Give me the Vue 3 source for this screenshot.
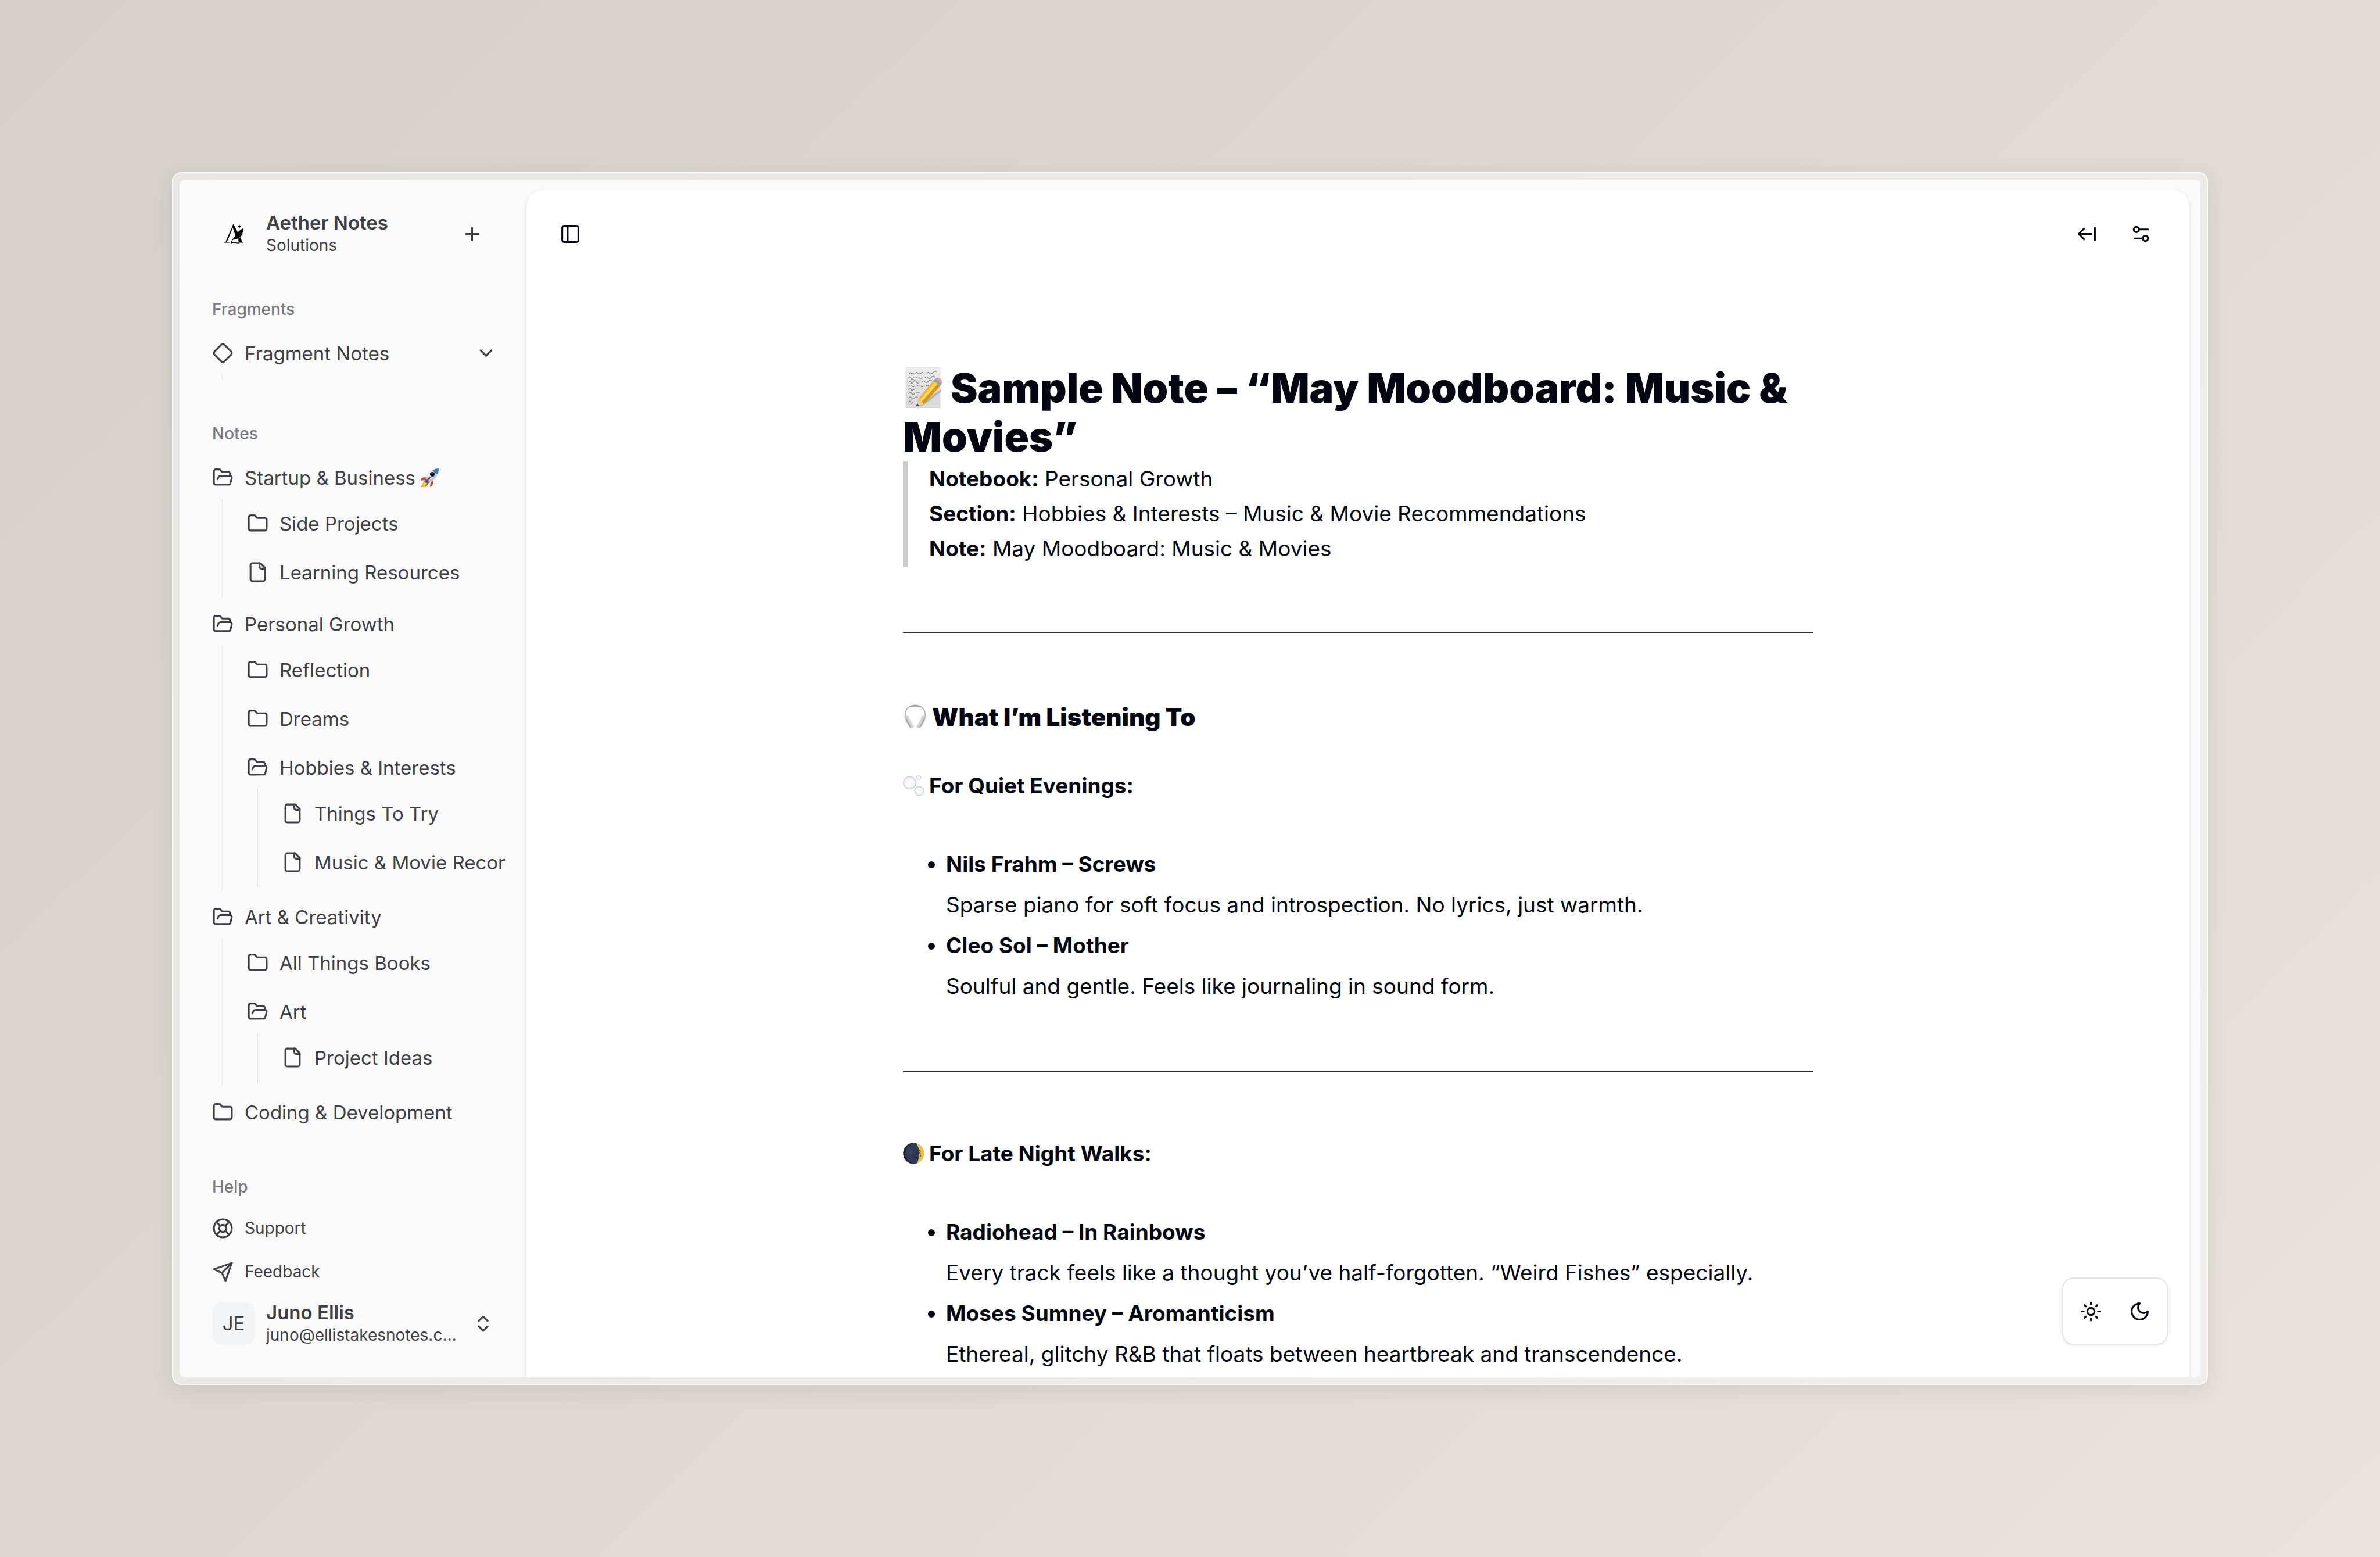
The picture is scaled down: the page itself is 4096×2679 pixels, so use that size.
<script setup>
const icons = {
  plus: ['M5 12h14', 'M12 5v14'],
  diamond: [
    'M2.7 10.3a2.41 2.41 0 0 0 0 3.41l7.59 7.59a2.41 2.41 0 0 0 3.41 0l7.59-7.59a2.41 2.41 0 0 0 0-3.41l-7.59-7.59a2.41 2.41 0 0 0-3.41 0Z',
  ],
  chevronDown: ['m6 9 6 6 6-6'],
  chevronsUpDown: ['m7 15 5 5 5-5', 'm7 9 5-5 5 5'],
  folder: [
    'M20 20a2 2 0 0 0 2-2V8a2 2 0 0 0-2-2h-7.9a2 2 0 0 1-1.69-.9L9.6 3.9A2 2 0 0 0 7.93 3H4a2 2 0 0 0-2 2v13a2 2 0 0 0 2 2Z',
  ],
  open: [
    'm6 14 1.5-2.9A2 2 0 0 1 9.24 10H20a2 2 0 0 1 1.94 2.5l-1.54 6a2 2 0 0 1-1.95 1.5H4a2 2 0 0 1-2-2V5a2 2 0 0 1 2-2h3.9a2 2 0 0 1 1.69.9l.81 1.2a2 2 0 0 0 1.67.9H18a2 2 0 0 1 2 2v2',
  ],
  file: ['M15 2H6a2 2 0 0 0-2 2v16a2 2 0 0 0 2 2h12a2 2 0 0 0 2-2V7Z', 'M14 2v4a2 2 0 0 0 2 2h4'],
  support: [
    'M2 12a10 10 0 1 0 20 0a10 10 0 1 0-20 0',
    'M8 12a4 4 0 1 0 8 0a4 4 0 1 0-8 0',
    'm4.93 4.93 4.24 4.24',
    'm14.83 9.17 4.24-4.24',
    'm14.83 14.83 4.24 4.24',
    'm9.17 14.83-4.24 4.24',
  ],
  send: ['m22 2-7 20-4-9-9-4Z', 'M22 2 11 13'],
  panel: ['M5 3h14a2 2 0 0 1 2 2v14a2 2 0 0 1-2 2H5a2 2 0 0 1-2-2V5a2 2 0 0 1 2-2Z', 'M9 3v18'],
  arrowLeft: ['m9 6-6 6 6 6', 'M3 12h14', 'M21 19V5'],
  settings: ['M20 7h-9', 'M14 17H5', 'M14 17a3 3 0 1 0 6 0a3 3 0 1 0-6 0', 'M4 7a3 3 0 1 0 6 0a3 3 0 1 0-6 0'],
  sun: [
    'M8 12a4 4 0 1 0 8 0a4 4 0 1 0-8 0',
    'M12 2v2',
    'M12 20v2',
    'm4.93 4.93 1.41 1.41',
    'm17.66 17.66 1.41 1.41',
    'M2 12h2',
    'M20 12h2',
    'm6.34 17.66-1.41 1.41',
    'm19.07 4.93-1.41 1.41',
  ],
  moon: ['M12 3a6 6 0 0 0 9 9 9 9 0 1 1-9-9Z'],
}

const notebooks = [
  {
    name: 'Startup & Business',
    icon: 'open',
    rocket: true,
    items: [
      { name: 'Side Projects', icon: 'folder' },
      { name: 'Learning Resources', icon: 'file' },
    ],
  },
  {
    name: 'Personal Growth',
    icon: 'open',
    items: [
      { name: 'Reflection', icon: 'folder' },
      { name: 'Dreams', icon: 'folder' },
      {
        name: 'Hobbies & Interests',
        icon: 'open',
        items: ['Things To Try', 'Music & Movie Recommendations'],
      },
    ],
  },
  {
    name: 'Art & Creativity',
    icon: 'open',
    items: [
      { name: 'All Things Books', icon: 'folder' },
      { name: 'Art', icon: 'open', items: ['Project Ideas'] },
    ],
  },
  { name: 'Coding & Development', icon: 'folder' },
]

const help = [
  { name: 'Support', icon: 'support' },
  { name: 'Feedback', icon: 'send' },
]

const quiet = [
  { title: 'Nils Frahm – Screws', text: 'Sparse piano for soft focus and introspection. No lyrics, just warmth.' },
  { title: 'Cleo Sol – Mother', text: 'Soulful and gentle. Feels like journaling in sound form.' },
]

const late = [
  {
    title: 'Radiohead – In Rainbows',
    text: 'Every track feels like a thought you’ve half-forgotten. “Weird Fishes” especially.',
  },
  {
    title: 'Moses Sumney – Aromanticism',
    text: 'Ethereal, glitchy R&B that floats between heartbreak and transcendence.',
  },
]
</script>

<template>
  <div class="stage">
    <div class="frame">
      <div class="window">
        <aside class="sidebar">
          <header class="brand">
            <svg class="tile" viewBox="0 0 92 92" aria-hidden="true">
              <g transform="translate(25 25)" fill="#000">
                <path d="M20.5 0 3.8 38.6H0V40.2H12.5V38.6H6.8L20 7Z" />
                <path d="M20.5 0 31 20.5 26 29 18.6 6Z" />
                <path d="M31 31.5 36 28.5 39 38.6H42V40.2H27.5V38.6H31.8Z" />
                <path d="M42 9.5C34 13 27.5 19 25 26C24 29 21 32 20 34C29 33 36 30 39 23C41 18 42 14 42 9.5Z" />
                <path d="M33.5 1 34.6 4.6 37.6 5.8 34.6 7 33.5 10.4 32.3 7 29.4 5.8 32.3 4.6Z" />
                <path d="M27 26C20 31 16.5 36 16 41.4C21 37.5 25 41.8 33 41" fill="none" stroke="#000" stroke-width="1.3" />
              </g>
            </svg>
            <div class="who">
              <strong>Aether Notes</strong>
              <span>Solutions</span>
            </div>
            <button class="bare" aria-label="Add note">
              <svg class="icon" viewBox="0 0 24 24"><path v-for="d in icons.plus" :key="d" :d="d" /></svg>
            </button>
          </header>

          <nav class="tree" aria-label="Notebooks">
            <h2 class="label">Fragments</h2>
            <button class="row fragment">
              <svg class="icon" viewBox="0 0 24 24"><path v-for="d in icons.diamond" :key="d" :d="d" /></svg>
              <span class="grow">Fragment Notes</span>
              <svg class="icon" viewBox="0 0 24 24"><path v-for="d in icons.chevronDown" :key="d" :d="d" /></svg>
            </button>
            <ul class="branch"></ul>

            <h2 class="label notes">Notes</h2>
            <ul class="roots">
              <li v-for="book in notebooks" :key="book.name">
                <button class="row">
                  <svg class="icon" viewBox="0 0 24 24"><path v-for="d in icons[book.icon]" :key="d" :d="d" /></svg>
                  <span>{{ book.name }}<svg v-if="book.rocket" class="emoji rocket" viewBox="0 0 33 33" role="img" aria-label="Rocket">
                      <path d="M9 14 2 17 1 21 7 20Z" fill="#e0452c" />
                      <path d="M18 24 17 32 21 30 23 21Z" fill="#d9381e" />
                      <path d="M8 20 1 32 5 32 14 25Z" fill="#f7931e" />
                      <path d="M8 23 3 31 12 26Z" fill="#ffe04d" />
                      <path d="M10 28 7 33 13 29 14 25Z" fill="#f15a24" />
                      <path d="M32 0C22 1 12 8 7 19C8 23 10 25 13 26C24 22 32 12 32 0Z" fill="#b9c7d6" />
                      <path d="M32 0C22 1 14 7 10 13L15 16C22 12 29 7 32 0Z" fill="#e4edf5" />
                      <path d="M32 0C28 0 25 1 22 3C24 7 27 9 30 10C31 7 32 4 32 0Z" fill="#3f74b5" />
                      <path d="M7 19C8 23 10 25 13 26L17 24C13 22 10 19 9 15Z" fill="#4a73a8" />
                      <circle cx="21" cy="10" r="4" fill="#1b1f2b" />
                      <path d="M16 14 9 24 11 25 18 16Z" fill="#8c2b24" />
                    </svg></span>
                </button>
                <ul v-if="book.items" class="branch">
                  <li v-for="item in book.items" :key="item.name">
                    <button class="row">
                      <svg class="icon" viewBox="0 0 24 24"><path v-for="d in icons[item.icon]" :key="d" :d="d" /></svg>
                      <span>{{ item.name }}</span>
                    </button>
                    <ul v-if="item.items" class="branch">
                      <li v-for="leaf in item.items" :key="leaf">
                        <button class="row">
                          <svg class="icon" viewBox="0 0 24 24"><path v-for="d in icons.file" :key="d" :d="d" /></svg>
                          <span>{{ leaf }}</span>
                        </button>
                      </li>
                    </ul>
                  </li>
                </ul>
              </li>
            </ul>
          </nav>

          <nav class="help" aria-label="Help">
            <h2 class="label">Help</h2>
            <a v-for="entry in help" :key="entry.name" class="row small" href="#">
              <svg class="icon" viewBox="0 0 24 24"><path v-for="d in icons[entry.icon]" :key="d" :d="d" /></svg>
              <span>{{ entry.name }}</span>
            </a>
          </nav>

          <button class="user">
            <span class="tile initials">JE</span>
            <span class="who">
              <strong>Juno Ellis</strong>
              <span>juno@ellistakesnotes.com</span>
            </span>
            <svg class="icon" viewBox="0 0 24 24"><path v-for="d in icons.chevronsUpDown" :key="d" :d="d" /></svg>
          </button>
        </aside>

        <main class="panel">
          <header class="bar">
            <button class="tool" aria-label="Toggle sidebar">
              <svg class="icon" viewBox="0 0 24 24"><path v-for="d in icons.panel" :key="d" :d="d" /></svg>
            </button>
            <div class="tools">
              <button class="tool" aria-label="Page width">
                <svg class="icon" viewBox="0 0 24 24"><path v-for="d in icons.arrowLeft" :key="d" :d="d" /></svg>
              </button>
              <button class="tool" aria-label="Settings">
                <svg class="icon" viewBox="0 0 24 24"><path v-for="d in icons.settings" :key="d" :d="d" /></svg>
              </button>
            </div>
          </header>

          <article class="note">
            <h1>
              <svg class="emoji memo" viewBox="0 0 70 70" role="img" aria-label="Memo">
                <defs>
                  <linearGradient id="paper" x1="0" y1="0" x2="0" y2="1">
                    <stop offset="0" stop-color="#eeeeee" />
                    <stop offset=".5" stop-color="#e2e2e2" />
                    <stop offset="1" stop-color="#d6d6d6" />
                  </linearGradient>
                </defs>
                <rect x="5" y="0" width="59" height="70" fill="url(#paper)" stroke="#cfcfcf" stroke-width=".6" />
                <g fill="none" stroke="#77787b" stroke-width="1.1" stroke-linecap="round">
                  <path d="M11 11q2-4 3 0q2-2 4 0t4-1t4 0t5 0t4 0m6 0q3-3 5 0t6-1t6-1" />
                  <path d="M10 19q3-4 4 0t5-1m5 0q2-3 4 0t5 0m5 0q3-3 5 0t6-1t6 0" />
                  <path d="M10 26q2-4 4 0t4-1t5 0t5 0m5 0q3-3 5 0t6-1t6 0" />
                  <path d="M10 32q3-3 5 0t5 0m5 0q3-3 5 0t6 0m4 0q2-2 5 0" />
                  <path d="M10 38q3-3 4 0t5 0" />
                  <path d="M10 45q3-4 5 0t5 0m4-1q2-2 4 0" />
                  <path d="M10 53q3-4 5 0t5 0t5-1" />
                  <path d="M10 60q2-4 3 0t4 0" />
                </g>
                <path d="M24 68 66 37 66 42 34 66Z" fill="#000" opacity=".18" />
                <path d="M26 55 52 23 64 32 36 63 27 65Z" fill="#f3b62c" />
                <path d="M29.5 56 55.5 25 59 28 32 60Z" fill="#fbd75c" />
                <path d="M32 60 60 29 64 32 36 63Z" fill="#d9911b" />
                <path d="M26 55 23 67 36 63 33 59 30 58 29 55Z" fill="#e6c796" />
                <path d="M24.3 62 23 67 28 65.5Z" fill="#27272a" />
                <path d="M52 23 56 19 67 28 64 32Z" fill="#93a4b5" />
                <path d="M56 19Q60 16 65 20Q69 25 67 28Z" fill="#ee9aa2" />
              </svg>Sample Note – “May Moodboard: Music &amp; Movies”
            </h1>
            <blockquote>
              <p><strong>Notebook:</strong> Personal Growth</p>
              <p><strong>Section:</strong> Hobbies &amp; Interests – Music &amp; Movie Recommendations</p>
              <p><strong>Note:</strong> May Moodboard: Music &amp; Movies</p>
            </blockquote>
            <hr />
            <h2 class="section">
              <svg class="emoji" viewBox="0 0 42 42" role="img" aria-label="Headphones">
                <path d="M4.500 25C1 9 10 1.500 21 1.500S41 9 37.500 25" fill="none" stroke="#b4b4b6" stroke-width="1.800" />
                <path d="M10 4.500Q21-2 32 4.500Q21 2 10 4.500" fill="#8f9092" stroke="#a0a1a3" />
                <path d="M5 20Q9 18 11 22L19 37Q18 41 15 41L9 37 4 28Z" fill="#d2d2d4" />
                <path d="M37 20Q33 18 31 22L23 37Q24 41 27 41L33 37 38 28Z" fill="#d2d2d4" />
                <path d="M5 24 13 40M37 24 29 40" stroke="#a5a6a9" stroke-width="2" fill="none" />
                <path d="M10 22 18 37M32 22 24 37" stroke="#ececed" stroke-width="2" fill="none" />
              </svg>What I’m Listening To
            </h2>
            <h3>
              <svg class="emoji" viewBox="0 0 37 37" role="img" aria-label="Bubbles">
                <defs>
                  <radialGradient id="bubble">
                    <stop offset=".6" stop-color="#f9f9fb" />
                    <stop offset=".85" stop-color="#e9e9f0" />
                    <stop offset="1" stop-color="#cccad6" />
                  </radialGradient>
                  <linearGradient id="sheen" x1="0" y1="0" x2="1" y2="1">
                    <stop offset="0" stop-color="#f3b9d4" />
                    <stop offset=".5" stop-color="#cdcbd5" />
                    <stop offset="1" stop-color="#9adcf0" />
                  </linearGradient>
                </defs>
                <g fill="url(#bubble)" stroke="url(#sheen)" stroke-width=".9">
                  <circle cx="11.500" cy="14" r="11" />
                  <circle cx="28" cy="28" r="8" />
                  <circle cx="27" cy="5" r="3.800" />
                </g>
              </svg>For Quiet Evenings:
            </h3>
            <ul class="picks">
              <li v-for="pick in quiet" :key="pick.title">
                <strong>{{ pick.title }}</strong>
                <p>{{ pick.text }}</p>
              </li>
            </ul>
            <hr />
            <h3>
              <svg class="emoji" viewBox="0 0 37 37" role="img" aria-label="Waxing crescent moon">
                <circle cx="18.500" cy="18.500" r="18" fill="#e9bd48" />
                <path d="M18.500.5A18 18 0 0 0 18.500 36.500Q22 36.800 24 35.500Q33 18 23 1Z" fill="#2f3b52" />
                <path d="M18.500.5A18 18 0 0 0 18.500 36.500Q4 31 4 18T18.500.5Z" fill="#1d2434" />
                <path d="M27 11 30 15 28 18 31 20M29 24 31 22" fill="none" stroke="#6f5d2b" stroke-width="1.500" />
                <circle cx="13" cy="17" r="4" fill="#3a465d" />
                <circle cx="19" cy="24" r="3" fill="#28334a" />
              </svg>For Late Night Walks:
            </h3>
            <ul class="picks">
              <li v-for="pick in late" :key="pick.title">
                <strong>{{ pick.title }}</strong>
                <p>{{ pick.text }}</p>
              </li>
            </ul>
          </article>

          <div class="theme" role="group" aria-label="Theme">
            <button class="tool" aria-label="Light theme">
              <svg class="icon" viewBox="0 0 24 24"><path v-for="d in icons.sun" :key="d" :d="d" /></svg>
            </button>
            <button class="tool" aria-label="Dark theme">
              <svg class="icon" viewBox="0 0 24 24"><path v-for="d in icons.moon" :key="d" :d="d" /></svg>
            </button>
          </div>
        </main>
      </div>
    </div>
  </div>
</template>

<style>
body {
  margin: 0;
}
</style>

<style scoped>
.stage {
  box-sizing: border-box;
  height: 100vh;
  padding: 296px;
  background: linear-gradient(135deg, #d5d0ca, #ddd8d1 45%, #ebe3dd);
  font-family: Inter, "Liberation Sans", sans-serif;
}

.frame {
  box-sizing: border-box;
  height: 100%;
  padding: 11px;
  border: 2px solid rgba(255, 255, 255, 0.85);
  border-radius: 16px;
  background: rgba(255, 255, 255, 0.45);
  background-clip: padding-box;
  box-shadow: 0 9px 37px rgba(60, 50, 40, 0.1);
}

.window {
  position: relative;
  display: flex;
  height: 100%;
  overflow: hidden;
  border-radius: 9px;
  background: #fafafa;
}

ul {
  margin: 0;
  padding: 0;
  list-style: none;
}

button {
  border: 0;
  background: none;
  color: inherit;
  font-family: inherit;
  text-align: left;
}

.icon {
  flex: none;
  display: block;
  width: 37px;
  height: 37px;
  fill: none;
  stroke: currentColor;
  stroke-width: 2;
  stroke-linecap: round;
  stroke-linejoin: round;
}

.sidebar {
  box-sizing: border-box;
  flex: none;
  display: flex;
  flex-direction: column;
  width: 597px;
  padding: 37px;
  color: #3f3f46;
}

.brand,
.user {
  box-sizing: border-box;
  flex: none;
  display: flex;
  align-items: center;
  gap: 19px;
  width: 100%;
  height: 112px;
  padding: 0 19px;
}

.tile {
  flex: none;
  width: 74px;
  height: 74px;
  border-radius: 19px;
}

.initials {
  background: #f3f4f6;
  font-size: 33px;
  line-height: 74px;
  text-align: center;
}

.who {
  flex: 1;
  min-width: 0;
  display: flex;
  flex-direction: column;
}

.who strong {
  font-size: 33px;
  font-weight: 600;
  line-height: 41px;
}

.who span {
  overflow: hidden;
  font-size: 28px;
  line-height: 37px;
  text-overflow: ellipsis;
  white-space: nowrap;
}

.bare {
  margin-right: 19px;
  padding: 0;
}

.tree {
  margin-top: 37px;
  overflow: hidden;
}

.label {
  margin: 0;
  padding-left: 19px;
  color: #797980;
  font-size: 28px;
  font-weight: 500;
  line-height: 75px;
}

.notes {
  margin-top: 55px;
}

.row {
  box-sizing: border-box;
  display: flex;
  align-items: center;
  gap: 19px;
  width: 100%;
  height: 75px;
  padding: 0 14px 0 19px;
  color: inherit;
  font-size: 33px;
  line-height: 46px;
  text-decoration: none;
  white-space: nowrap;
}

.grow {
  flex: 1;
}

.small {
  height: 66px;
  font-size: 28px;
}

.branch {
  margin-left: 36px;
  padding: 4px 0 5px 22px;
  border-left: 2px solid #e5e7eb;
}

.roots,
.roots .branch {
  display: flex;
  flex-direction: column;
  gap: 9px;
}

.help {
  margin-top: auto;
}

.small + .small {
  margin-top: 9px;
}

.panel {
  flex: 1;
  min-width: 0;
  margin: 18px 19px 0 0;
  border-radius: 28px 28px 0 0;
  background: #fff;
  box-shadow: 0 2px 7px rgba(0, 0, 0, 0.1), 0 2px 5px -2px rgba(0, 0, 0, 0.1);
  color: #030712;
}

.bar {
  display: flex;
  align-items: center;
  justify-content: space-between;
  height: 150px;
  padding: 0 42px 0 33px;
}

.tools {
  display: flex;
  gap: 9px;
}

.tool {
  display: flex;
  align-items: center;
  justify-content: center;
  width: 84px;
  height: 84px;
  padding: 0;
}

.note {
  max-width: 1566px;
  margin: 0 auto;
  padding-top: 149px;
  font-size: 37px;
}

.emoji {
  width: 37px;
  height: 37px;
  margin-right: 8px;
  vertical-align: -5px;
}

.rocket {
  width: 33px;
  height: 33px;
  margin: 0 0 0 8px;
}

h1 {
  margin: 0;
  font-size: 70px;
  font-weight: 900;
  line-height: 84px;
}

.memo {
  width: 70px;
  height: 70px;
  margin-right: 12px;
  vertical-align: -9px;
}

blockquote {
  margin: 0;
  padding: 0 0 2px 37px;
  border-left: 8px solid #c9c9c9;
  line-height: 60px;
}

p {
  margin: 0;
}

.note strong {
  font-weight: 700;
}

hr {
  height: 2px;
  margin: 111px 0 105px;
  border: 0;
  background: #2b2b2e;
}

.section {
  margin: 110px 0 48px;
  font-size: 42px;
  font-weight: 900;
  line-height: 70px;
}

.section .emoji {
  width: 42px;
  height: 42px;
}

h3 {
  margin: 0 0 65px;
  font-size: 37px;
  font-weight: 700;
  line-height: 70px;
}

.picks {
  padding-left: 74px;
  line-height: 70px;
  list-style: disc;
}

.theme {
  position: absolute;
  right: 56px;
  bottom: 56px;
  display: flex;
  padding: 14px 5px;
  border: 2px solid #e5e5e5;
  border-radius: 19px;
  background: #fff;
  box-shadow: 0 2px 5px rgba(0, 0, 0, 0.06);
}
</style>
